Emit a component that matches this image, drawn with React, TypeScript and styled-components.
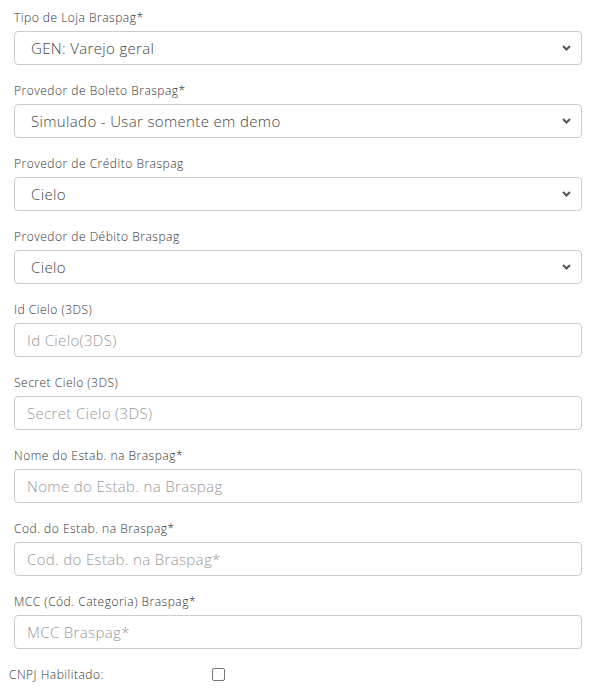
import styled, { createGlobalStyle } from "styled-components";

const GlobalStyle = createGlobalStyle`
    body {
        margin: 0;
        background: #fff;
        font-family: "Open Sans", "Liberation Sans", sans-serif;
        font-weight: 300;
    }
`;

const Form = styled.form`
    width: 596px;
    padding: 9px 14px 0 14px;
    box-sizing: border-box;
`;

const Group = styled.div`
    margin-bottom: 17px;
`;

const Label = styled.label`
    display: block;
    font-size: 12px;
    line-height: 17px;
    letter-spacing: 0.5px;
    color: #333;
    margin-bottom: 5px;
`;

const Field = styled.div`
    position: relative;
`;

const Control = styled.input`
    display: block;
    width: 100%;
    height: 34px;
    box-sizing: border-box;
    padding: 0 12px;
    border: 1px solid #ccc;
    border-radius: 4px;
    font-family: inherit;
    font-weight: 300;
    font-size: 15px;
    letter-spacing: 0.35px;
    color: #444;
    background: #fff;
    outline: none;
    &::placeholder {
        color: #999;
    }
`;

const Select = styled.select`
    display: block;
    width: 100%;
    height: 34px;
    box-sizing: border-box;
    padding: 0 30px 0 16px;
    border: 1px solid #ccc;
    border-radius: 4px;
    font-family: inherit;
    font-weight: 300;
    font-size: 15px;
    letter-spacing: 0.35px;
    color: #444;
    background: #fff;
    appearance: none;
    outline: none;
`;

const Chevron = styled.svg`
    position: absolute;
    right: 11px;
    top: 14px;
    width: 9px;
    height: 6px;
    pointer-events: none;
`;

const CheckRow = styled.div`
    display: flex;
    align-items: center;
    margin: 10px 0 0 -5px;
`;

const CheckLabel = styled.label`
    width: 203px;
    font-size: 12px;
    letter-spacing: 0.5px;
    color: #333;
`;

const Check = styled.span`
    width: 13px;
    height: 13px;
    box-sizing: border-box;
    border: 1px solid #777;
    border-radius: 2px;
`;

type SelectProps = { label: string; value: string };

function SelectField({ label, value }: SelectProps) {
    return (
        <Group>
            <Label>{label}</Label>
            <Field>
                <Select defaultValue={value}>
                    <option>{value}</option>
                </Select>
                <Chevron viewBox="0 0 9 6">
                    <path d="M1 1l3.5 3.5L8 1" fill="none" stroke="#555" strokeWidth="2" />
                </Chevron>
            </Field>
        </Group>
    );
}

type InputProps = { label: string; placeholder: string };

function InputField({ label, placeholder }: InputProps) {
    return (
        <Group>
            <Label>{label}</Label>
            <Control placeholder={placeholder} />
        </Group>
    );
}

export default function App() {
    return (
        <>
            <GlobalStyle />
            <Form>
                <SelectField label="Tipo de Loja Braspag*" value="GEN: Varejo geral" />
                <SelectField label="Provedor de Boleto Braspag*" value="Simulado - Usar somente em demo" />
                <SelectField label="Provedor de Crédito Braspag" value="Cielo" />
                <SelectField label="Provedor de Débito Braspag" value="Cielo" />
                <InputField label="Id Cielo (3DS)" placeholder="Id Cielo(3DS)" />
                <InputField label="Secret Cielo (3DS)" placeholder="Secret Cielo (3DS)" />
                <InputField label="Nome do Estab. na Braspag*" placeholder="Nome do Estab. na Braspag" />
                <InputField label="Cod. do Estab. na Braspag*" placeholder="Cod. do Estab. na Braspag*" />
                <InputField label="MCC (Cód. Categoria) Braspag*" placeholder="MCC Braspag*" />
                <CheckRow>
                    <CheckLabel>CNPJ Habilitado:</CheckLabel>
                    <Check />
                </CheckRow>
            </Form>
        </>
    );
}
